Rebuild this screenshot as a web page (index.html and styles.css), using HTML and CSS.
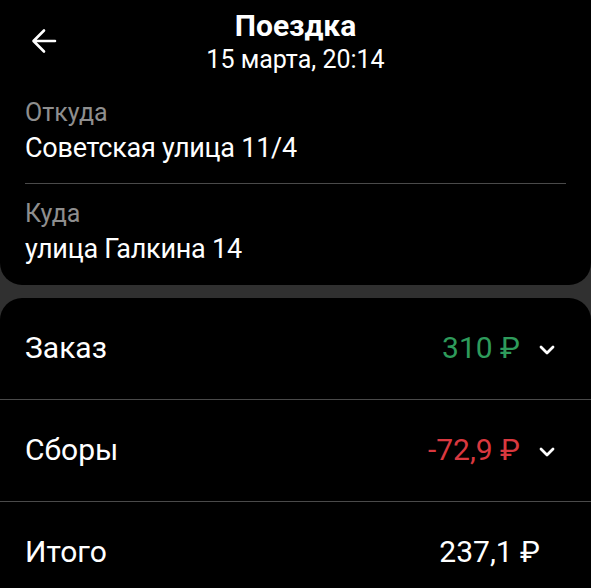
FILE: index.html
```html
<!DOCTYPE html>
<html lang="ru">
<head>
  <meta charset="UTF-8">
  <title>Поездка</title>
  <link rel="stylesheet" href="styles.css">
</head>
<body>

  <div class="card top-card">
    <div class="header">
      <button class="back" aria-label="Назад">
        <svg width="26" height="26" viewBox="0 0 26 26">
          <path d="M24 13H3M13 2.5L2.5 13L13 23.5" fill="none" stroke="#fff" stroke-width="2.6" stroke-linecap="round" stroke-linejoin="round"/>
        </svg>
      </button>
      <div class="title-box">
        <h1>Поездка</h1>
        <div class="date">15 марта, 20:14</div>
      </div>
    </div>

    <div class="field with-line">
      <div class="label">Откуда</div>
      <div class="value">Советская улица 11/4</div>
    </div>
    <div class="field second">
      <div class="label">Куда</div>
      <div class="value">улица Галкина 14</div>
    </div>
  </div>

  <div class="card bill">
    <div class="row">
      <span class="name">Заказ</span>
      <span class="sum green">310 ₽</span>
      <svg class="chev" width="18" height="12" viewBox="0 0 18 12"><path d="M3 3l6 6 6-6" fill="none" stroke="#fff" stroke-width="2.8" stroke-linecap="round" stroke-linejoin="round"/></svg>
    </div>
    <div class="row">
      <span class="name">Сборы</span>
      <span class="sum red">-72,9 ₽</span>
      <svg class="chev" width="18" height="12" viewBox="0 0 18 12"><path d="M3 3l6 6 6-6" fill="none" stroke="#fff" stroke-width="2.8" stroke-linecap="round" stroke-linejoin="round"/></svg>
    </div>
    <div class="row">
      <span class="name">Итого</span>
      <span class="sum total">237,1 ₽</span>
    </div>
  </div>

</body>
</html>
```

FILE: styles.css
```css
body {
  margin: 0;
  background-color: #303030;
  font-family: Roboto, "Noto Sans", sans-serif;
  color: #fff;
  overflow: hidden;
}
.card {
  background-color: #000;
}
.top-card {
  border-radius: 0 0 22px 22px;
  padding: 0 25px 18px;
  margin-bottom: 13px;
}
.header {
  position: relative;
  height: 99px;
  padding-top: 9px;
  box-sizing: border-box;
  text-align: center;
}
.back {
  position: absolute;
  left: 6px;
  top: 28px;
  background: none;
  border: none;
  padding: 0;
  display: flex;
}
h1 {
  margin: 0;
  font-size: 30px;
  font-weight: bold;
  line-height: 34px;
}
.date {
  margin-top: 2px;
  font-size: 25px;
  line-height: 30px;
}
.with-line {
  border-bottom: 1px solid #4a4a4a;
  padding-bottom: 17px;
}
.second {
  padding-top: 16px;
}
.label {
  color: #8e8e8e;
  font-size: 25px;
  line-height: 28px;
}
.value {
  margin-top: 3px;
  font-size: 27px;
  line-height: 36px;
  letter-spacing: -0.25px;
}
.bill {
  border-radius: 22px 22px 0 0;
}
.row {
  display: flex;
  align-items: flex-start;
  height: 70px;
  padding: 31px 35px 0 25px;
  border-bottom: 1px solid #4a4a4a;
  font-size: 30px;
  line-height: 38px;
}
.row:last-child {
  border-bottom: none;
}
.name {
  flex: 1;
}
.total {
  margin-right: 16px;
}
.green {
  color: #2e9b5b;
}
.red {
  color: #d9383f;
}
.chev {
  margin: 15px 0 0 18px;
}
```
